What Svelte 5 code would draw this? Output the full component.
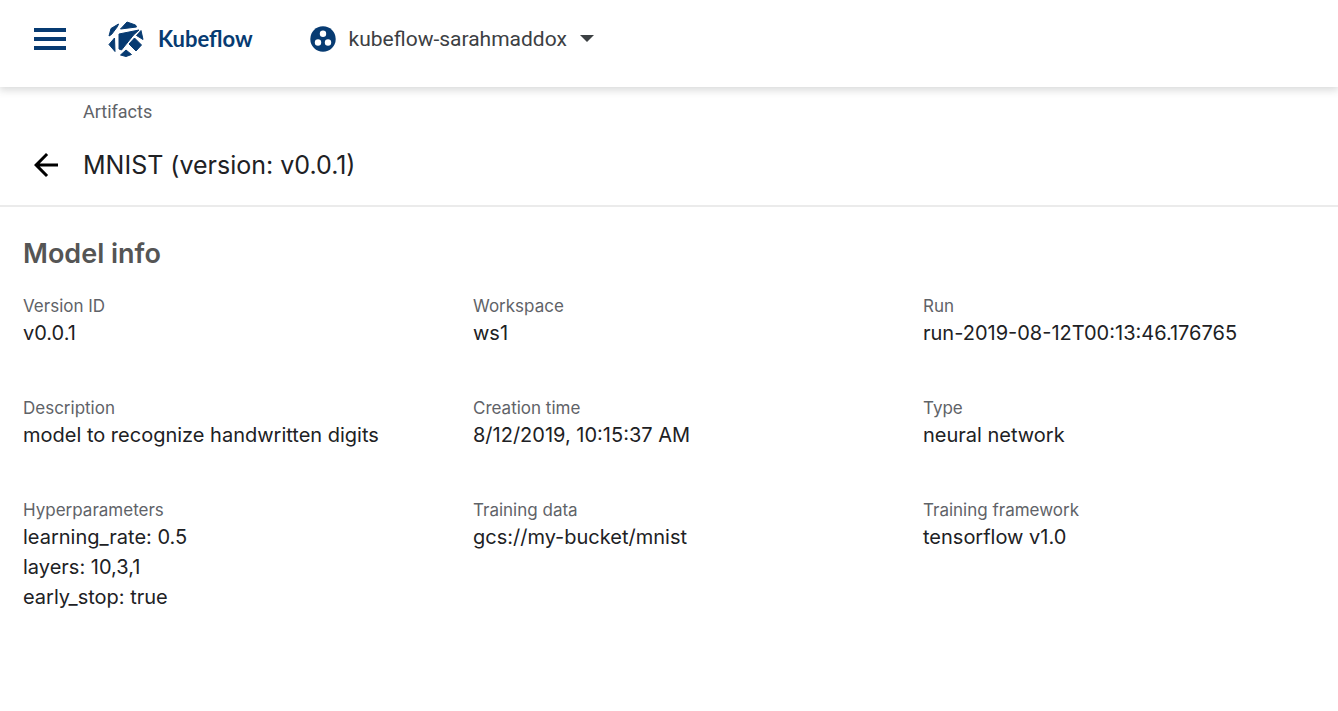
<script>
  const fields = [
    { label: 'Version ID', values: ['v0.0.1'] },
    { label: 'Workspace', values: ['ws1'] },
    { label: 'Run', values: ['run-2019-08-12T00:13:46.176765'] },
    { label: 'Description', values: ['model to recognize handwritten digits'] },
    { label: 'Creation time', values: ['8/12/2019, 10:15:37 AM'] },
    { label: 'Type', values: ['neural network'] },
    { label: 'Hyperparameters', values: ['learning_rate: 0.5', 'layers: 10,3,1', 'early_stop: true'] },
    { label: 'Training data', values: ['gcs://my-bucket/mnist'] },
    { label: 'Training framework', values: ['tensorflow v1.0'] },
  ];
</script>

<header class="topbar">
  <button class="icon-button menu" aria-label="Menu">
    <svg width="32" height="22" viewBox="0 0 32 22" aria-hidden="true">
      <path d="M0 0h32v4H0zM0 9h32v4H0zM0 18h32v4H0z" />
    </svg>
  </button>
  <a class="brand" href="#home">
    <svg width="36" height="36" viewBox="0 0 36 36" aria-hidden="true">
      <g stroke-linejoin="round" stroke-width="1">
        <path d="M1 15 3 7.500 10.500 3 9.500 5.500 3.500 13.500z" />
        <path d="M12.500 8 19 1 27.500 4 28.500 6z" />
        <path d="M11 13 31 9 25.500 14 13.500 29 11 28z" />
        <path d="M1 23.500 6.500 17 7 30.500z" />
        <path d="M28.500 14.500 33 9.500 35 18.500z" />
        <path d="M21 23 26.500 17 33.500 24 28 30z" />
        <path d="M12.500 34 18 29 23.500 33.500 18 35.500z" />
      </g>
    </svg>
    <span>Kubeflow</span>
  </a>
  <button class="namespace">
    <svg width="26" height="26" viewBox="0 0 26 26" aria-hidden="true">
      <circle cx="13" cy="13" r="12.700" />
      <g fill="#fff"><circle cx="13" cy="7.800" r="3.200" /><circle cx="8" cy="16.500" r="3.200" /><circle cx="18" cy="16.500" r="3.200" /></g>
    </svg>
    <span>kubeflow-sarahmaddox</span>
    <svg class="caret" width="14" height="7" viewBox="0 0 14 7" aria-hidden="true"><path d="M0 0h14L7 7z" /></svg>
  </button>
</header>

<div class="page-head">
  <nav aria-label="Breadcrumb"><a href="#artifacts">Artifacts</a></nav>
  <div class="title-row">
    <button class="icon-button" aria-label="Back">
      <svg width="24" height="24" viewBox="4 4 16 16" aria-hidden="true">
        <path d="M20 11H7.830l5.590-5.590L12 4l-8 8 8 8 1.410-1.410L7.830 13H20v-2z" />
      </svg>
    </button>
    <h1>MNIST (version: v0.0.1)</h1>
  </div>
</div>

<main>
  <h2>Model info</h2>
  <dl>
    {#each fields as field}
      <div class="field">
        <dt>{field.label}</dt>
        {#each field.values as value}
          <dd>{value}</dd>
        {/each}
      </div>
    {/each}
  </dl>
</main>

<style>
  :global(body) {
    background: #fff;
    color: #202124;
    font-family: 'Google Sans', Inter, sans-serif;
  }
  button {
    padding: 0;
    border: 0;
    background: none;
    font: inherit;
    color: inherit;
    cursor: pointer;
  }
  a { color: inherit; text-decoration: none; }
  svg { display: block; flex: none; }
  .topbar {
    position: relative;
    display: flex;
    align-items: center;
    box-sizing: border-box;
    height: 87px;
    padding: 0 34px 10px;
    background: #fff;
    box-shadow: 0 2px 8px 1px rgba(60, 64, 67, 0.2);
  }
  .topbar svg { fill: #073b72; }
  .brand g { stroke: #073b72; }
  .brand {
    display: flex;
    align-items: center;
    gap: 14px;
    margin: 0 57px 0 42px;
    color: #073b72;
    font-family: Lato, sans-serif;
    font-size: 22px;
    font-weight: 700;
  }
  .namespace {
    display: flex;
    align-items: center;
    gap: 13px;
    color: #3c4043;
    font-family: Roboto, sans-serif;
    font-size: 21px;
  }
  .topbar .caret { fill: #3c4043; }
  .page-head {
    padding: 12px 34px 20px;
    border-bottom: 2px solid #ebebeb;
  }
  nav {
    padding-left: 49px;
    color: #5f6368;
    font: 18px/26px Roboto, sans-serif;
  }
  .title-row {
    display: flex;
    align-items: center;
    gap: 25px;
    padding-top: 20px;
  }
  h1 { margin: 0; font-size: 25px; font-weight: 400; line-height: 40px; }
  main { padding: 30px 23px; }
  h2 { margin: 0 0 23px; color: #555; font-size: 27px; font-weight: 600; line-height: 34px; }
  dl {
    display: grid;
    grid-template-columns: repeat(3, minmax(0, 1fr));
    column-gap: 58px;
    row-gap: 48px;
    margin: 0;
  }
  dt { color: #5f6368; font-size: 17px; line-height: 24px; }
  dd { margin: 0; font-size: 20px; line-height: 30px; }
</style>
